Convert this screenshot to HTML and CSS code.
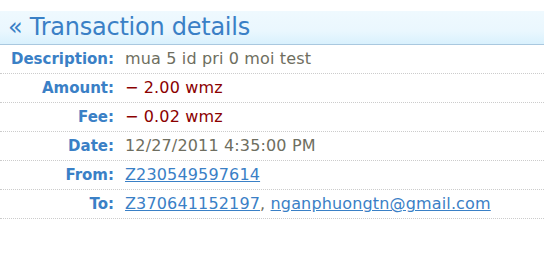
FILE: index.html
```
<!DOCTYPE html>
<html lang="en">

<head>
    <meta charset="UTF-8">
    <title>Transaction details</title>
    <link rel="stylesheet" href="styles.css">
</head>

<body>
    <div class="details">
        <h1 class="details-title">« Transaction details</h1>

        <div class="row">
            <div class="label">Description:</div>
            <div class="value">mua 5 id pri 0 moi test</div>
        </div>
        <div class="row">
            <div class="label">Amount:</div>
            <div class="value minus">− 2.00 wmz</div>
        </div>
        <div class="row">
            <div class="label">Fee:</div>
            <div class="value minus">− 0.02 wmz</div>
        </div>
        <div class="row">
            <div class="label">Date:</div>
            <div class="value">12/27/2011 4:35:00 PM</div>
        </div>
        <div class="row">
            <div class="label">From:</div>
            <div class="value"><a href="#">Z230549597614</a></div>
        </div>
        <div class="row">
            <div class="label">To:</div>
            <div class="value"><a href="#">Z370641152197</a>, <a href="#">nganphuongtn@gmail.com</a></div>
        </div>
    </div>
</body>

</html>
```

FILE: styles.css
```
body {
    margin: 0;
    padding: 11px 0 0;
    background: #ffffff;
    font-family: "DejaVu Sans", Verdana, sans-serif;
    font-size: 15px;
}

.details-title {
    margin: 0;
    height: 33px;
    line-height: 33px;
    padding-left: 8px;
    font-size: 24px;
    letter-spacing: -0.25px;
    font-weight: normal;
    color: #3a80c6;
    background: linear-gradient(#eff9fe, #eaf7fe 60%, #d9f1fd);
    border-bottom: 1px solid #a9c8df;
}

.row {
    display: flex;
    gap: 11px;
    height: 28px;
    line-height: 28px;
    border-bottom: 1px dotted #cccccc;
}

.label {
    width: 114px;
    flex-shrink: 0;
    text-align: right;
    font-weight: bold;
    color: #3a80c6;
}

.value {
    font-size: 16px;
    letter-spacing: 0.15px;
    color: #6e6e60;
}

.value.minus {
    color: #8b0000;
}

.value a {
    color: #3a80c6;
}
```
